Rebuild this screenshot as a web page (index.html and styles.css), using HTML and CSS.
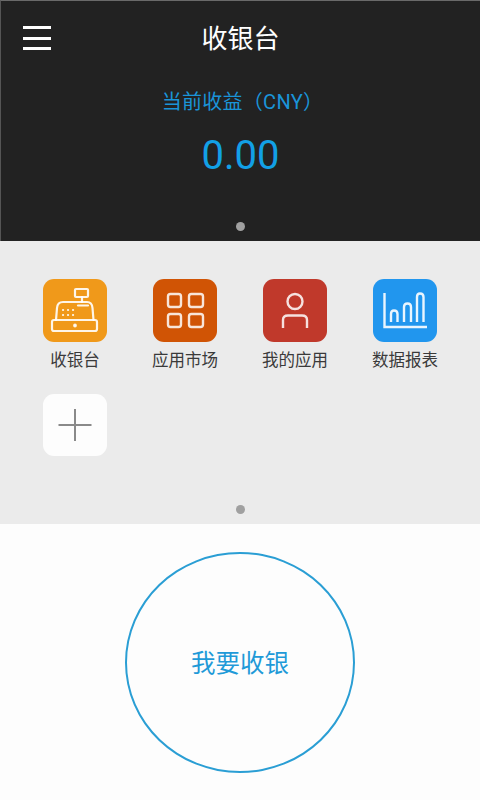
FILE: index.html
```html
<!DOCTYPE html>
<html lang="zh-CN">
    <head>
        <meta charset="UTF-8">
        <meta name="viewport" content="width=device-width, initial-scale=1.0">
        <title>收银台</title>
        <link rel="stylesheet" href="styles.css">
    </head>
    <body>
        <header class="top">
            <div class="top-bar">
                <button class="menu-btn" aria-label="菜单">
                    <span></span><span></span><span></span>
                </button>
                <h1 class="title">收银台</h1>
            </div>
            <div class="earn-label">当前收益（CNY）</div>
            <div class="earn-value">0.00</div>
            <div class="dot"></div>
        </header>

        <section class="apps">
            <div class="app-grid">
                <div class="app">
                    <div class="app-icon icon-orange">
                        <svg viewBox="0 0 64 63" width="64" height="63" fill="none" stroke="#fff" stroke-width="2.2" stroke-opacity="0.9" stroke-linecap="round" stroke-linejoin="round">
                            <rect x="32" y="10" width="13" height="8" rx="1"/>
                            <path d="M39 18V23"/>
                            <path d="M13 41L14 29Q14.5 23 20 23H44Q49 23 49.5 29L50.5 41"/>
                            <path d="M35 26.5H45"/>
                            <rect x="9" y="41" width="45" height="11" rx="2"/>
                            <circle cx="32" cy="46.5" r="0.8" fill="#fff"/>
                            <path d="M20 31h.1M25 31h.1M30 31h.1M20 36h.1M25 36h.1M30 36h.1"/>
                        </svg>
                    </div>
                    <div class="app-name">收银台</div>
                </div>
                <div class="app">
                    <div class="app-icon icon-rust">
                        <svg viewBox="0 0 64 63" width="64" height="63" fill="none" stroke="#fff" stroke-width="2.4" stroke-opacity="0.85">
                            <rect x="15" y="15" width="13" height="13" rx="2.5"/>
                            <rect x="36" y="15" width="14" height="13" rx="2.5"/>
                            <rect x="15" y="35" width="13" height="13" rx="2.5"/>
                            <rect x="36" y="35" width="14" height="13" rx="2.5"/>
                        </svg>
                    </div>
                    <div class="app-name">应用市场</div>
                </div>
                <div class="app">
                    <div class="app-icon icon-red">
                        <svg viewBox="0 0 64 63" width="64" height="63" fill="none" stroke="#fff" stroke-width="2.4" stroke-opacity="0.85">
                            <circle cx="32" cy="22.5" r="7.5"/>
                            <path d="M20 49V41Q20 36.5 25 36.5H39Q44 36.5 44 41V49"/>
                        </svg>
                    </div>
                    <div class="app-name">我的应用</div>
                </div>
                <div class="app">
                    <div class="app-icon icon-blue">
                        <svg viewBox="0 0 64 63" width="64" height="63" fill="none" stroke="#fff" stroke-width="2.4" stroke-opacity="0.9">
                            <path d="M11.5 14V48H54"/>
                            <path d="M18 43V35Q18 31.5 21 31.5Q24.5 31.5 24.5 35V43"/>
                            <path d="M31 43V28Q31 24.5 34.5 24.5Q38 24.5 38 28V43"/>
                            <path d="M44 43V18Q44 14.5 47 14.5Q50.5 14.5 50.5 18V43"/>
                        </svg>
                    </div>
                    <div class="app-name">数据报表</div>
                </div>
                <div class="app">
                    <div class="app-icon icon-add">
                        <svg viewBox="0 0 64 62" width="64" height="62" fill="none" stroke="#8a8a8a" stroke-width="2">
                            <path d="M32 15V47M15.5 31H48.5"/>
                        </svg>
                    </div>
                </div>
            </div>
            <div class="dot"></div>
        </section>

        <main class="cashier">
            <button class="cash-btn">我要收银</button>
        </main>
    </body>
</html>
```

FILE: styles.css
```css
* {
    box-sizing: border-box;
}
body {
    margin: 0;
    width: 480px;
    height: 800px;
    overflow: hidden;
    background-color: #fdfdfd;
    font-family: Roboto, "Noto Sans CJK SC", sans-serif;
}
.top {
    height: 241px;
    padding-top: 19px;
    background-color: #222222;
    border-top: 1px solid #6a6a6a;
    border-left: 1px solid #555555;
    display: flex;
    flex-direction: column;
    align-items: center;
}
.top-bar {
    width: 100%;
    height: 38px;
    padding-left: 22px;
    display: flex;
    align-items: center;
    position: relative;
}
.menu-btn {
    width: 28px;
    margin-top: -2px;
    padding: 0;
    background: none;
    border: none;
    display: flex;
    flex-direction: column;
    gap: 7.5px;
}
.menu-btn span {
    display: block;
    height: 3px;
    background-color: #ffffff;
}
.title {
    position: absolute;
    left: 0;
    right: 0;
    margin: 0;
    text-align: center;
    font-size: 26px;
    line-height: 36px;
    font-weight: 400;
    color: #ffffff;
}
.earn-label {
    margin-top: 30px;
    padding-left: 4px;
    font-size: 20px;
    line-height: 28px;
    letter-spacing: 0.3px;
    color: #1a94d8;
}
.earn-value {
    margin-top: 16px;
    font-size: 40px;
    line-height: 48px;
    color: #12a0e6;
}
.dot {
    width: 9px;
    height: 9px;
    border-radius: 50%;
    background-color: #a0a0a0;
}
.top .dot {
    margin-top: 42px;
}
.apps {
    height: 283px;
    padding-top: 38px;
    background-color: #ebebeb;
    display: flex;
    flex-direction: column;
    align-items: center;
}
.app-grid {
    width: 440px;
    height: 225px;
    display: grid;
    grid-template-columns: repeat(4, 110px);
    grid-auto-rows: 115px;
}
.app {
    display: flex;
    flex-direction: column;
    align-items: center;
}
.app-icon {
    width: 64px;
    height: 63px;
    border-radius: 11px;
}
.app-icon svg {
    display: block;
}
.icon-orange {
    background-color: #f0991a;
}
.icon-rust {
    background-color: #d05405;
}
.icon-red {
    background-color: #c0392b;
}
.icon-blue {
    background-color: #2196ee;
}
.icon-add {
    height: 62px;
    background-color: #fdfdfd;
}
.app-name {
    margin-top: 8px;
    font-size: 16.5px;
    line-height: 22px;
    white-space: nowrap;
    color: #3a3a3a;
}
.apps .dot {
    margin-top: 1px;
}
.cashier {
    padding-top: 28px;
    display: flex;
    justify-content: center;
}
.cash-btn {
    width: 230px;
    height: 221px;
    padding: 0 0 3px;
    border: 2px solid #2a9ed4;
    border-radius: 50%;
    background: none;
    font-family: inherit;
    font-size: 24.5px;
    color: #1f9ad8;
}
```
